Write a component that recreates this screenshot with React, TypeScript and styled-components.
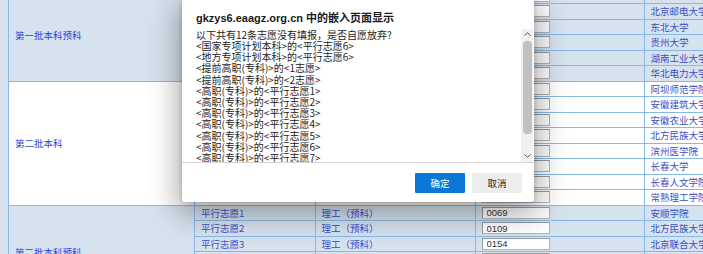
import React from 'react';
import styled, { createGlobalStyle } from 'styled-components';

const GlobalStyle = createGlobalStyle`
  html, body { margin: 0; padding: 0; overflow: hidden; }
  body {
    background: #d6e1ec;
    font-family: "Noto Sans CJK SC", sans-serif;
  }
`;

const Page = styled.div`
  position: relative;
  width: 703px;
  height: 254px;
  overflow: hidden;
  padding-left: 8px;
  box-sizing: border-box;
`;

const Table = styled.table`
  border-collapse: collapse;
  table-layout: fixed;
  width: 796px;
  margin-top: -12.5px;
  border-left: 1px solid #86b9e8;
`;

const Row = styled.tr<{ $shade: boolean }>`
  background: ${(p) => (p.$shade ? '#d6e2ee' : '#ffffff')};
`;

const Cell = styled.td`
  height: 14.5px;
  padding: 0 6px;
  border: 1px solid #86b9e8;
  font-size: 9.5px;
  line-height: 12px;
  color: #3a4fc6;
  white-space: nowrap;
  overflow: hidden;
  vertical-align: middle;
`;

const GroupCell = styled(Cell)`
  color: #2f47d2;
`;

const CodeInput = styled.input`
  display: block;
  box-sizing: border-box;
  width: 68px;
  height: 12px;
  margin: 0;
  padding: 0 4px;
  border: 1px solid #b4b4b4;
  border-top-color: #9a9a9a;
  border-left-color: #9a9a9a;
  background: #ffffff;
  font-family: "Liberation Sans", Arial, sans-serif;
  font-size: 9.5px;
  color: #333;
  outline: none;
`;

const Dialog = styled.div`
  position: absolute;
  left: 182px;
  top: 0;
  width: 352px;
  height: 202px;
  background: #ffffff;
  border-radius: 0 0 3px 3px;
  box-shadow: 0 8px 30px 4px rgba(0, 0, 0, 0.34), 0 0 5px rgba(0, 0, 0, 0.2);
  display: flex;
  flex-direction: column;
`;

const Title = styled.div`
  padding: 11px 14px 0;
  height: 14px;
  line-height: 14px;
  font-family: "Liberation Sans", "Noto Sans CJK SC", sans-serif;
  font-weight: bold;
  font-size: 11px;
  color: #1a1a1a;
  white-space: nowrap;
`;

const Body = styled.div`
  margin-top: 3.7px;
  height: 133.3px;
  display: flex;
  border-bottom: 1px solid #d4d4d4;
`;

const Message = styled.div`
  flex: 1;
  overflow: hidden;
  padding-left: 14px;
  font-size: 10px;
  line-height: 11.22px;
  color: #222;
  white-space: nowrap;
`;

const ScrollTrack = styled.div`
  width: 12px;
  margin-right: 1px;
  background: #f1f1f1;
  display: flex;
  flex-direction: column;
  align-items: center;
`;

const Arrow = styled.div`
  height: 11px;
  display: flex;
  align-items: center;
  justify-content: center;
`;

const Thumb = styled.div`
  width: 9px;
  height: 93px;
  margin: 1px 0;
  border-radius: 4px;
  background: #c1c1c1;
`;

const Spacer = styled.div`
  flex: 1;
`;

const Footer = styled.div`
  display: flex;
  justify-content: flex-end;
  gap: 7px;
  padding: 10px 12px 0;
`;

const Button = styled.button<{ $primary?: boolean }>`
  width: 50px;
  height: 20px;
  margin: 0;
  padding: 0;
  border: none;
  border-radius: 1px;
  background: ${(p) => (p.$primary ? '#0b78d6' : '#ededed')};
  color: ${(p) => (p.$primary ? '#ffffff' : '#1f1f1f')};
  font-family: "Noto Sans CJK SC", sans-serif;
  font-size: 9.5px;
  line-height: 20px;
`;

type R = { wish: string; kind: string; code: string; school: string };
type G = { name: string; shade: boolean; rows: R[] };

const groups: G[] = [
  {
    name: '第一批本科预科',
    shade: true,
    rows: [
      { wish: '', kind: '', code: '', school: '' },
      { wish: '平行志愿2', kind: '理工（预科）', code: '0013', school: '北京邮电大学' },
      { wish: '平行志愿3', kind: '理工（预科）', code: '0032', school: '东北大学' },
      { wish: '平行志愿4', kind: '理工（预科）', code: '0058', school: '贵州大学' },
      { wish: '平行志愿5', kind: '理工（预科）', code: '0064', school: '湖南工业大学' },
      { wish: '平行志愿6', kind: '理工（预科）', code: '0071', school: '华北电力大学' },
    ],
  },
  {
    name: '第二批本科',
    shade: false,
    rows: [
      { wish: '平行志愿1', kind: '理工', code: '2001', school: '阿坝师范学院' },
      { wish: '平行志愿2', kind: '理工', code: '2014', school: '安徽建筑大学' },
      { wish: '平行志愿3', kind: '理工', code: '2016', school: '安徽农业大学' },
      { wish: '平行志愿4', kind: '理工', code: '2035', school: '北方民族大学' },
      { wish: '平行志愿5', kind: '理工', code: '2047', school: '滨州医学院' },
      { wish: '平行志愿6', kind: '理工', code: '2062', school: '长春大学' },
      { wish: '平行志愿7', kind: '理工', code: '2068', school: '长春人文学院' },
      { wish: '平行志愿8', kind: '理工', code: '2071', school: '常熟理工学院' },
    ],
  },
  {
    name: '第二批本科预科',
    shade: true,
    rows: [
      { wish: '平行志愿1', kind: '理工（预科）', code: '0069', school: '安顺学院' },
      { wish: '平行志愿2', kind: '理工（预科）', code: '0109', school: '北方民族大学' },
      { wish: '平行志愿3', kind: '理工（预科）', code: '0154', school: '北京联合大学' },
      { wish: '', kind: '', code: '', school: '' },
      { wish: '', kind: '', code: '', school: '' },
      { wish: '', kind: '', code: '', school: '' },
    ],
  },
];

const lines = [
  '以下共有12条志愿没有填报，是否自愿放弃?',
  '<国家专项计划本科>的<平行志愿6>',
  '<地方专项计划本科>的<平行志愿6>',
  '<提前高职(专科)>的<1志愿>',
  '<提前高职(专科)>的<2志愿>',
  '<高职(专科)>的<平行志愿1>',
  '<高职(专科)>的<平行志愿2>',
  '<高职(专科)>的<平行志愿3>',
  '<高职(专科)>的<平行志愿4>',
  '<高职(专科)>的<平行志愿5>',
  '<高职(专科)>的<平行志愿6>',
  '<高职(专科)>的<平行志愿7>',
  '<高职(专科)>的<平行志愿8>',
];

const Chevron = ({ up }: { up?: boolean }) => (
  <svg width="7" height="4" viewBox="0 0 7 4">
    <polyline
      points={up ? '0.5,3.5 3.5,0.8 6.5,3.5' : '0.5,0.5 3.5,3.2 6.5,0.5'}
      fill="none"
      stroke="#505050"
      strokeWidth="1"
    />
  </svg>
);

export default function App() {
  return (
    <Page>
      <GlobalStyle />
      <Table>
        <colgroup>
          <col style={{ width: 186 }} />
          <col style={{ width: 120.5 }} />
          <col style={{ width: 160 }} />
          <col style={{ width: 169 }} />
          <col style={{ width: 160 }} />
        </colgroup>
        <tbody>
          {groups.map((g) =>
            g.rows.map((r, i) => (
              <Row key={g.name + i} $shade={g.shade}>
                {i === 0 && <GroupCell rowSpan={g.rows.length}>{g.name}</GroupCell>}
                <Cell>{r.wish}</Cell>
                <Cell>{r.kind}</Cell>
                <Cell>
                  <CodeInput defaultValue={r.code} readOnly />
                </Cell>
                <Cell>{r.school}</Cell>
              </Row>
            ))
          )}
        </tbody>
      </Table>
      <Dialog>
        <Title>gkzys6.eaagz.org.cn 中的嵌入页面显示</Title>
        <Body>
          <Message>
            {lines.map((l) => (
              <div key={l}>{l}</div>
            ))}
          </Message>
          <ScrollTrack>
            <Arrow>
              <Chevron up />
            </Arrow>
            <Thumb />
            <Spacer />
            <Arrow>
              <Chevron />
            </Arrow>
          </ScrollTrack>
        </Body>
        <Footer>
          <Button $primary>确定</Button>
          <Button>取消</Button>
        </Footer>
      </Dialog>
    </Page>
  );
}
